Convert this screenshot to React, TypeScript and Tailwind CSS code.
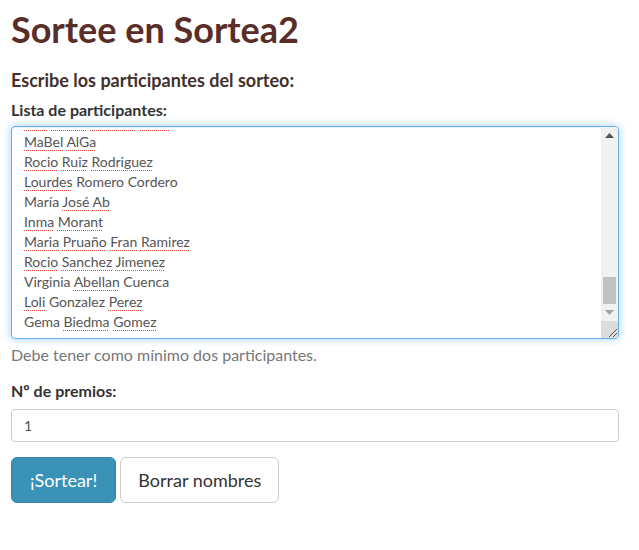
import React from 'react';

type Word = { t: string; bad?: boolean };

// names in the textarea; bad = word with the spellcheck squiggle
const names: Word[][] = [
  [{ t: 'Ana', bad: true }, { t: 'María', bad: true }, { t: 'Sabater', bad: true }, { t: 'Vidal', bad: true }],
  [{ t: 'MaBel', bad: true }, { t: 'AlGa', bad: true }],
  [{ t: 'Rocio', bad: true }, { t: 'Ruiz', bad: true }, { t: 'Rodriguez', bad: true }],
  [{ t: 'Lourdes', bad: true }, { t: 'Romero' }, { t: 'Cordero' }],
  [{ t: 'María' }, { t: 'José', bad: true }, { t: 'Ab', bad: true }],
  [{ t: 'Inma', bad: true }, { t: 'Morant', bad: true }],
  [{ t: 'Maria', bad: true }, { t: 'Pruaño', bad: true }, { t: 'Fran', bad: true }, { t: 'Ramirez', bad: true }],
  [{ t: 'Rocio', bad: true }, { t: 'Sanchez', bad: true }, { t: 'Jimenez', bad: true }],
  [{ t: 'Virginia' }, { t: 'Abellan', bad: true }, { t: 'Cuenca' }],
  [{ t: 'Loli', bad: true }, { t: 'Gonzalez' }, { t: 'Perez', bad: true }],
  [{ t: 'Gema' }, { t: 'Biedma', bad: true }, { t: 'Gomez', bad: true }],
];

function NameLine({ words }: { words: Word[] }) {
  return (
    <div className="h-[20px] leading-[20px] whitespace-nowrap">
      {words.map((w, i) => (
        <React.Fragment key={i}>
          {i > 0 && ' '}
          <span
            className={
              w.bad
                ? 'underline decoration-dotted decoration-[#e0453f] decoration-[1px] underline-offset-[3px]'
                : ''
            }
          >
            {w.t}
          </span>
        </React.Fragment>
      ))}
    </div>
  );
}

function FakeScrollbar() {
  return (
    <div className="w-[17px] flex flex-col bg-[#f1f1f1]">
      <div className="h-[17px] flex items-center justify-center">
        <svg width="9" height="5" viewBox="0 0 9 5">
          <path d="M0 5 L4.5 0 L9 5 Z" fill="#505050" />
        </svg>
      </div>
      <div className="flex-1 flex flex-col justify-end px-[2px]">
        <div className="h-[27px] bg-[#c1c1c1]" />
      </div>
      <div className="h-[17px] flex items-center justify-center">
        <svg width="9" height="5" viewBox="0 0 9 5">
          <path d="M0 0 L9 0 L4.5 5 Z" fill="#a3a3a3" />
        </svg>
      </div>
      <div className="h-[17px] bg-[#dcdcdc] flex items-end justify-end">
        <svg width="12" height="12" viewBox="0 0 12 12">
          <path d="M11 3 L3 11 M11 7 L7 11" stroke="#555" strokeWidth="1" />
        </svg>
      </div>
    </div>
  );
}

export default function App() {
  return (
    <div className="min-h-[550px] bg-white pl-[11px] pr-[20px] pt-[7px] text-[#333] font-['Lato',sans-serif]">
      <h1 className="text-[36px] leading-[44px] font-bold text-[#5a2e28]">Sortee en Sortea2</h1>

      <h3 className="mt-[18px] text-[18px] leading-[22px] font-bold text-[#43302b]">
        Escribe los participantes del sorteo:
      </h3>

      {/* Lista */}
      <div className="mt-[9px]">
        <label className="block text-[16px] leading-[20px] font-bold text-[#333]">Lista de participantes:</label>
        <div className="mt-[6px] h-[213px] flex border border-[#66afe9] rounded-[4px] bg-white shadow-[inset_0_1px_1px_rgba(0,0,0,0.075),0_0_8px_rgba(102,175,233,0.6)] overflow-hidden">
          <div className="flex-1 overflow-hidden pl-[12px] text-[14px] text-[#555]">
            <div className="-mt-[15px]">
              {names.map((n, i) => (
                <NameLine key={i} words={n} />
              ))}
            </div>
          </div>
          <FakeScrollbar />
        </div>
        <p className="mt-[6px] text-[16px] leading-[20px] text-[#777]">Debe tener como mínimo dos participantes.</p>
      </div>

      {/* Premios */}
      <div className="mt-[16px]">
        <label className="block text-[16px] leading-[20px] font-bold text-[#333]">Nº de premios:</label>
        <div className="mt-[8px] h-[33px] border border-[#ccc] rounded-[4px] flex items-center px-[12px] text-[14px] text-[#555]">
          1
        </div>
      </div>

      <div className="mt-[15px] flex gap-[4px]">
        <button className="h-[46px] px-[18px] rounded-[6px] bg-[#3a93b7] border border-[#3585a6] text-white text-[18px]">
          ¡Sortear!
        </button>
        <button className="h-[46px] px-[17px] rounded-[6px] bg-white border border-[#ccc] text-[#333] text-[18px]">
          Borrar nombres
        </button>
      </div>
    </div>
  );
}
